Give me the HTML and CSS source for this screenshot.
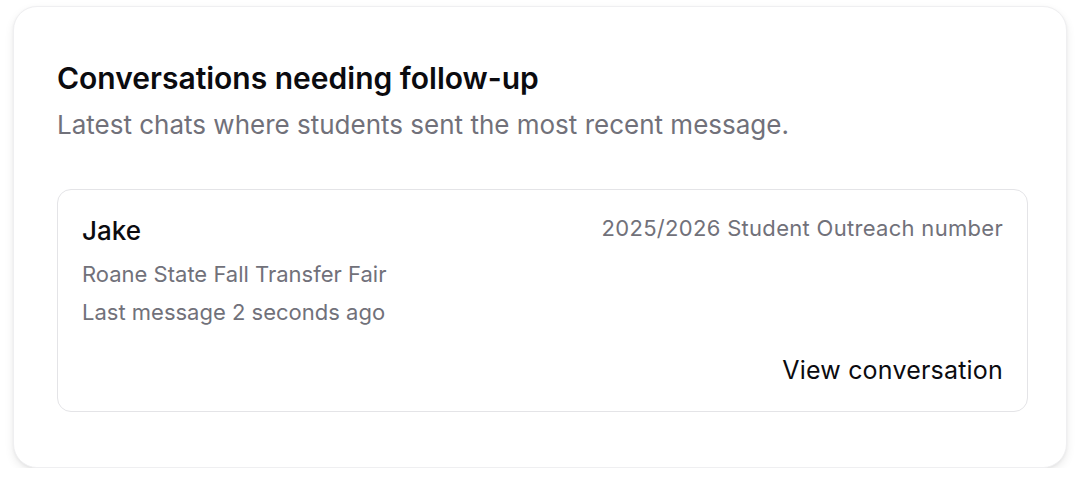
FILE: index.html
```html
<!DOCTYPE html>
<html>
<head>
<meta charset="utf-8">
<link rel="stylesheet" href="styles.css">
</head>
<body>
<section class="panel">
  <h2 class="title">Conversations needing follow-up</h2>
  <p class="subtitle">Latest chats where students sent the most recent message.</p>
  <div class="item">
    <div class="item-top">
      <div class="item-info">
        <div class="name">Jake</div>
        <div class="meta">Roane State Fall Transfer Fair</div>
        <div class="meta">Last message 2 seconds ago</div>
      </div>
      <div class="number">2025/2026 Student Outreach number</div>
    </div>
    <div class="item-actions">
      <a class="link">View conversation</a>
    </div>
  </div>
</section>
</body>
</html>
```

FILE: styles.css
```css
html, body {
  margin: 0;
  padding: 0;
  background: #ffffff;
}
body {
  font-family: Inter, "Noto Sans", sans-serif;
  padding: 6px 13px 0 13px;
}
.panel {
  box-sizing: border-box;
  width: 1054px;
  height: 462px;
  background: #fff;
  border: 1px solid #efeff1;
  border-radius: 24px;
  box-shadow: 0 4px 10px rgba(0,0,0,0.08), 0 1px 3px rgba(0,0,0,0.05);
  padding: 53px 38px 0 43px;
}
.title {
  margin: 0;
  font-size: 30px;
  line-height: 36px;
  font-weight: 600;
  color: #0b0b0f;
}
.subtitle {
  margin: 13px 0 0 0;
  font-size: 26px;
  line-height: 32px;
  color: #71717a;
}
.item {
  margin-top: 48px;
  box-sizing: border-box;
  height: 223px;
  border: 1px solid #e4e4e7;
  border-radius: 14px;
  padding: 25px 24px 0 24px;
}
.item-top {
  display: flex;
  justify-content: space-between;
  align-items: flex-start;
}
.name {
  font-size: 26px;
  line-height: 32px;
  font-weight: 500;
  color: #0b0b0f;
}
.meta {
  font-size: 22px;
  line-height: 28px;
  color: #71717a;
  margin-top: 13px;
}
.meta + .meta {
  margin-top: 10px;
}
.number {
  font-size: 22px;
  line-height: 28px;
  letter-spacing: 0.3px;
  color: #71717a;
  margin-top: -1px;
}
.item-actions {
  display: flex;
  justify-content: flex-end;
  margin-top: 29px;
}
.link {
  font-size: 25px;
  line-height: 30px;
  letter-spacing: 0.2px;
  color: #0b0b0f;
}
```
